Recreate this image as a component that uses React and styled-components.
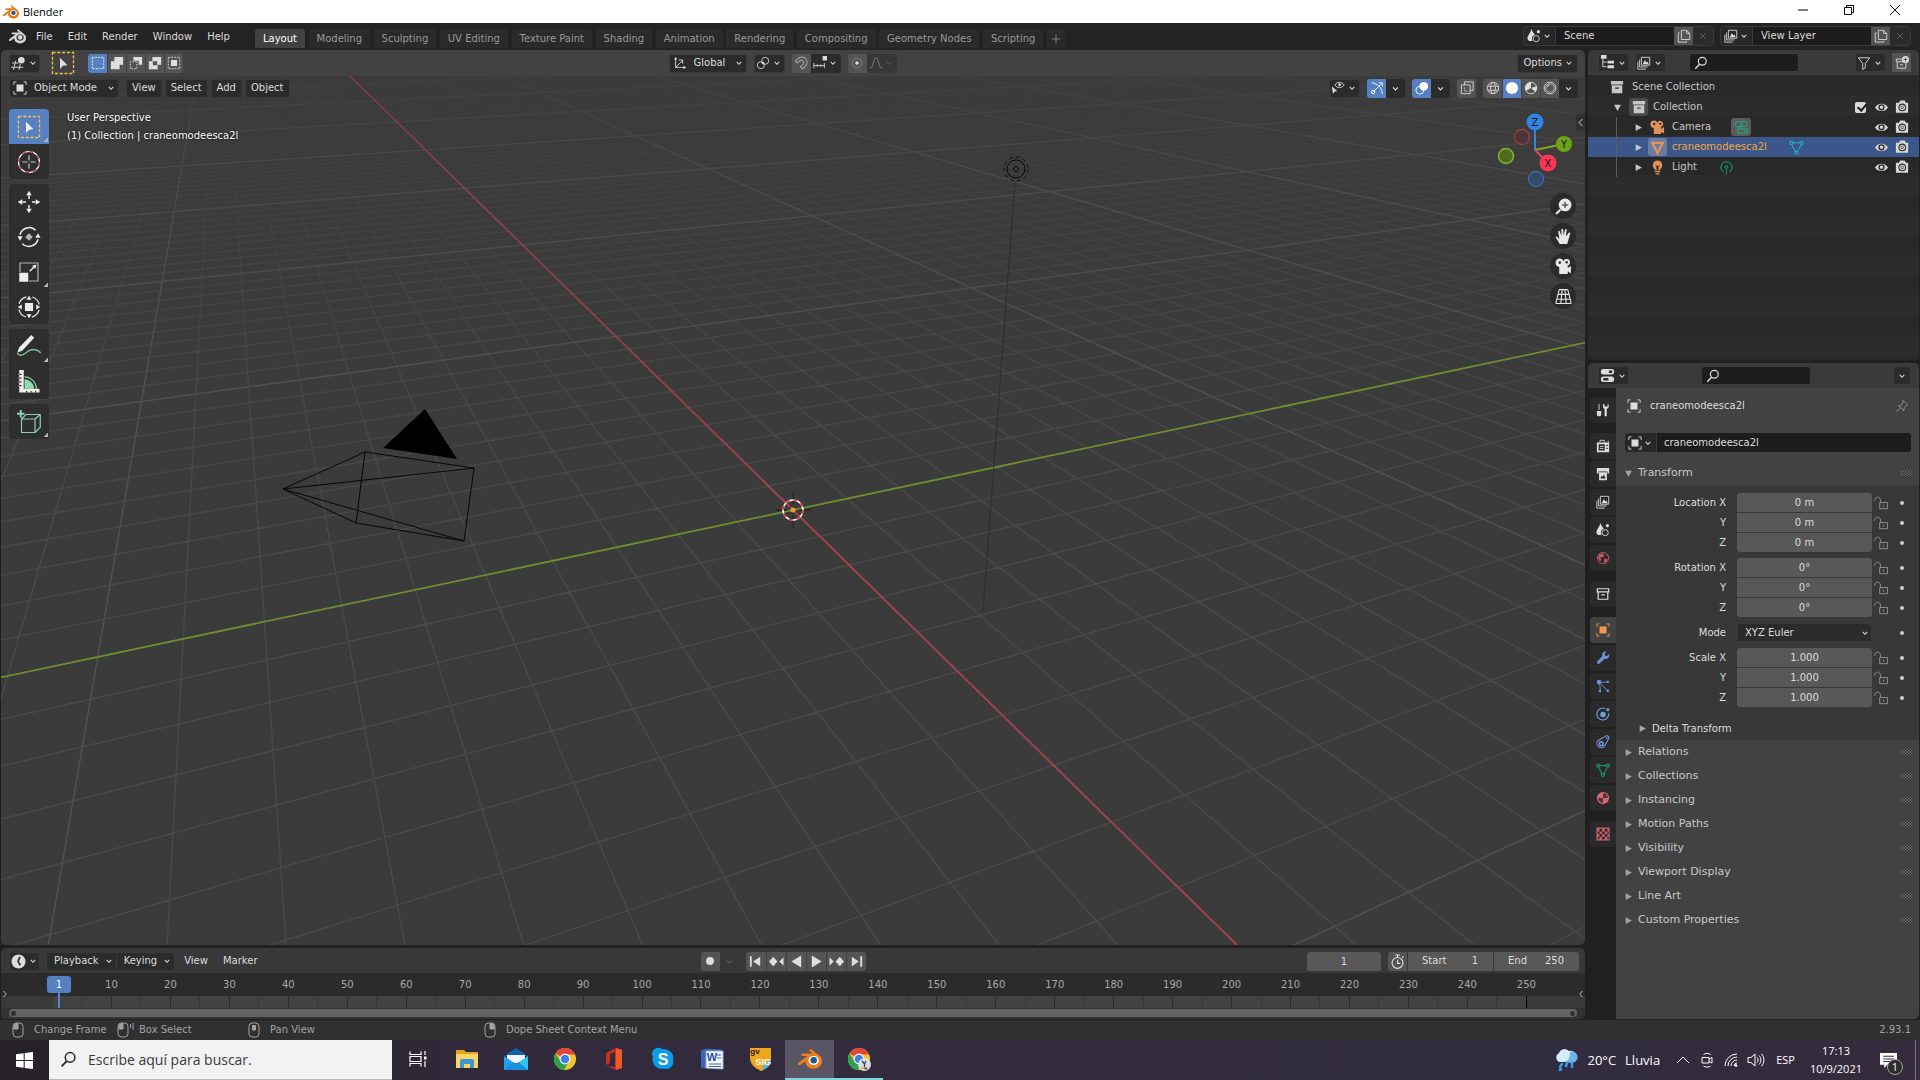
import React, { useState } from 'react';
import styled, { createGlobalStyle, css } from 'styled-components';

/* viewport grid: simple pinhole projection of the ground plane */
const VIEW = {
  width: 1584,
  height: 895,
  cx: 792,
  cy: 460,
  focal: 1100,
  distance: 18.1,
  sin: 0.455,
  cos: 0.8905,
};
const AXIS_X = [-0.4212, 0.907];
const AXIS_Y = [0.907, 0.4212];

const project = (r, s) => {
  const depth = VIEW.distance + s * VIEW.cos;
  return [
    (VIEW.cx + (VIEW.focal * r) / depth).toFixed(1),
    (VIEW.cy - (VIEW.focal * s * VIEW.sin) / depth).toFixed(1),
  ].join(' ');
};

const gridLine = (k, dir, side) => {
  const r0 = side[0] * k;
  const s0 = side[1] * k;
  const near = (3 - VIEW.distance - s0 * VIEW.cos) / (dir[1] * VIEW.cos);
  const from = Math.max(-150, near);
  const to = 220;
  if (from >= to) return '';
  return `M${project(r0 + dir[0] * from, s0 + dir[1] * from)}L${project(
    r0 + dir[0] * to,
    s0 + dir[1] * to,
  )}`;
};

const range = (from, to) =>
  Array.from({ length: to - from + 1 }, (_, i) => from + i);

const both = k => gridLine(k, AXIS_X, AXIS_Y) + gridLine(k, AXIS_Y, AXIS_X);
const minorGrid = range(-90, 90)
  .filter(k => k % 10 !== 0)
  .map(both)
  .join('');
const majorGrid = range(-12, 12)
  .filter(k => k !== 0)
  .map(k => both(k * 10))
  .join('');

const LOGO_BODY =
  'M7.35 14.831c.006.314.106.922.256 1.398a7.372 7.372 0 0 0 1.593 2.757 8.227 8.227 0 0 0 2.787 2.001 8.947 8.947 0 0 0 3.66.76 8.964 8.964 0 0 0 3.657-.772 8.285 8.285 0 0 0 2.785-2.01 7.428 7.428 0 0 0 1.592-2.762 6.964 6.964 0 0 0 .25-3.074 7.123 7.123 0 0 0-1.016-2.779 7.764 7.764 0 0 0-1.852-2.043h.002L13.566 2.55l-.02-.015c-.492-.378-1.319-.376-1.86.002-.547.382-.609 1.015-.123 1.415l-.001.001 3.126 2.543-9.53.01h-.013c-.788.001-1.545.518-1.695 1.172-.154.665.38 1.217 1.2 1.22V8.9l4.83-.01-8.62 6.617-.034.025c-.813.622-1.075 1.658-.563 2.315.52.667 1.625.668 2.447.004L7.414 14s-.069.52-.063.831zm12.09 1.741c-.97.988-2.326 1.548-3.795 1.55-1.47.004-2.827-.552-3.797-1.538a4.51 4.51 0 0 1-1.036-1.622 4.282 4.282 0 0 1 .282-3.519 4.702 4.702 0 0 1 1.153-1.371c.942-.768 2.141-1.183 3.396-1.185 1.256-.002 2.455.41 3.398 1.175.48.391.87.854 1.152 1.367a4.28 4.28 0 0 1 .522 1.706 4.236 4.236 0 0 1-.239 1.811 4.54 4.54 0 0 1-1.035 1.626';

const fill = { fill: 'currentColor', stroke: 'none' };

const icons = {
  chevron: <path d="M5 6.5l3 3.2 3-3.2" strokeWidth="1.4" />,
  plus: <path d="M8 2.500v11M2.500 8h11" />,
  close: <path d="M4 4l8 8M12 4l-8 8" />,
  left: <path d="M11 2L5.500 8l5.500 6" strokeWidth="1.6" />,
  right: <path d="M5 2l5.500 6L5 14" strokeWidth="1.6" />,
  triRight: <path d="M3 2v12l11-6z" {...fill} />,
  triDown: <path d="M2 3h12L8 14z" {...fill} />,
  search: (
    <>
      <circle cx="9.500" cy="6" r="4.500" strokeWidth="1.400" />
      <path d="M6.300 9.500L1.500 14.500" strokeWidth="1.600" />
    </>
  ),
  editor3d: (
    <>
      <path d="M1 7.500h7M0 12h13M5 5L2.500 15M10 8.500L8.500 15" />
      <circle cx="11" cy="4.500" r="3.500" {...fill} />
    </>
  ),
  boxSelect: (
    <>
      <rect
        x="1"
        y="1"
        width="14"
        height="14"
        stroke="#f5c344"
        strokeDasharray="2 1.200"
        strokeWidth=".9"
      />
      <path d="M6 4.500v7.500l2-2.200 3-.3z" {...fill} />
    </>
  ),
  dashed: (
    <rect x="1.500" y="1.500" width="13" height="13" strokeDasharray="2 1.300" />
  ),
  selExtend: <path d="M1 6h4V1h10v9h-4v5H1z" {...fill} />,
  selSubtract: (
    <>
      <path d="M5 1h10v9h-4V5.500H5z" {...fill} />
      <path d="M9 6.500H1.500v8H9z" strokeDasharray="2 1.300" />
    </>
  ),
  selInvert: (
    <path
      d="M5 1h10v9h-4v5H1V6h4zM5.500 6v4.500h5V6z"
      fillRule="evenodd"
      {...fill}
    />
  ),
  selIntersect: (
    <>
      <rect x="1.500" y="1.500" width="13" height="13" strokeDasharray="2 1.300" />
      <path d="M4.500 4.500h7v7h-7z" {...fill} />
    </>
  ),
  object: (
    <>
      <path d="M1 4.500V1h3M12 1h3v3.500M15 11.500V15h-3M4 15H1v-3.500" />
      <path d="M4 4h8v8H4z" {...fill} />
    </>
  ),
  axes: (
    <>
      <path d="M3 2v11h11M3 13l8-8M11 9V4.500H6.500" />
      <path d="M1 4l2-3 2 3zM12 11l3 2-3 2z" {...fill} />
    </>
  ),
  pivot: (
    <>
      <circle cx="10.500" cy="5.500" r="4" />
      <circle cx="5.500" cy="10.500" r="4" />
      <circle cx="8" cy="8" r="1.500" {...fill} />
    </>
  ),
  magnet: (
    <path
      d="M1.500 5.500L6 2c4-2.500 9 1 9 5 0 3.500-2.500 5.500-5.500 8L7.300 12.300c3-2 4.200-3.300 3.700-5S8.500 4 7 5.200L3.500 8z"
      strokeWidth="1.200"
    />
  ),
  snapTo: (
    <>
      <path d="M1 8v6M5 9.500v3M9 9.500v3M13 8v6M1 11h12" />
      <path d="M11 0h5v5h-5z" {...fill} />
    </>
  ),
  proportional: (
    <>
      <circle cx="8" cy="8" r="5.500" opacity=".35" />
      <circle cx="8" cy="8" r="2" {...fill} />
    </>
  ),
  falloff: <path d="M1 14c4 0 4-12 7-12s3 12 7 12" />,
  visible: (
    <>
      <path d="M1 6l1.200 8.500 2-2.500 3-.4z" {...fill} />
      <path d="M4.500 4.500c2-4 8-4 10.500 0-2.500 4-8.500 4-10.500 0z" />
      <circle cx="9.800" cy="4.300" r="1.600" {...fill} />
    </>
  ),
  gizmo: (
    <>
      <path d="M2 2c7 1 12 6 12 13M3 13L13 3M10 2h4v4" />
      <circle cx="3.500" cy="12.500" r="2" />
    </>
  ),
  overlays: (
    <>
      <circle cx="10" cy="6" r="5" {...fill} />
      <circle cx="5.500" cy="10.500" r="4.500" />
    </>
  ),
  xray: (
    <>
      <path d="M5 4.500V1h10v10h-3.500M1.500 4.500h10v10h-10z" />
      <path d="M5 7.500v4h4" strokeDasharray="1.500 1" />
    </>
  ),
  wireSphere: (
    <>
      <circle cx="8" cy="8" r="6.500" />
      <ellipse cx="8" cy="8" rx="2.700" ry="6.500" />
      <path d="M2 6h12M2 10.500h12" />
    </>
  ),
  solidSphere: <circle cx="8" cy="8" r="7" {...fill} />,
  materialSphere: (
    <>
      <circle cx="8" cy="8" r="6.500" />
      <path d="M8 8V1.500A6.500 6.500 0 0 0 2.400 11zM8 8l5 4.300A6.500 6.500 0 0 0 14 6z" {...fill} />
    </>
  ),
  renderSphere: (
    <>
      <circle cx="8" cy="8" r="6.700" />
      <circle cx="8" cy="8" r="4.800" strokeWidth=".8" />
      <path d="M5 7c.3-1.700 1.300-2.500 2.600-2.600" />
    </>
  ),
  scene: (
    <>
      <path d="M5 0C4 5 0 8 .5 11c.5 3 4 3.500 6 2-2-3 0-6 2.500-6.500C6.500 4 6 2 5 0z" {...fill} />
      <circle cx="10.500" cy="11" r="3.500" />
      <circle cx="13" cy="3" r="1.800" {...fill} />
    </>
  ),
  copy: (
    <>
      <path d="M5 1.500h6L14.500 5v7H5zM11 1.500V5h3.500" />
      <path d="M3 4.500H1.500V15H11v-1.500" />
    </>
  ),
  layers: (
    <>
      <path d="M5 1.500h9.500v9H5zM3 4v8.500h9M1 6.500V15h9" />
      <path d="M6.500 9.500l2.500-5 1.800 3 1-1.200L13.500 9.500z" {...fill} />
    </>
  ),
  outliner: (
    <>
      <path d="M3 4v8.500h4M3 7.500h4" />
      <path d="M1 0h6v4H1zM8 6h7v3H8zM8 11h7v3H8z" {...fill} />
    </>
  ),
  filter: <path d="M1.500 2h13L9.500 8.500v5l-3 2v-7z" />,
  newCollection: (
    <>
      <path d="M8 3.500H1.500v3h10M2.500 7v7h10V8M6 10h3" />
      <circle cx="12" cy="4" r="4" {...fill} />
      <path d="M12 1.800v4.400M9.800 4h4.400" stroke="#444" />
    </>
  ),
  archive: (
    <path
      d="M1 1h14v4H1zM2 6h12v9H2zM6 8.500h4V10H6z"
      fillRule="evenodd"
      {...fill}
    />
  ),
  archiveLine: (
    <path d="M1.500 2h13v3.500h-13zM2.500 6v8h11V6M6 9h4" strokeWidth="1.400" />
  ),
  movie: (
    <path
      d="M4.500.5a3.500 3.500 0 0 1 3.300 2.300A3.300 3.300 0 1 1 11 7.500h1v2l3-2v7l-3-2V15H4V8.500H4.500a4 4 0 0 1 0-8zM4.500 3a1.300 1.300 0 1 0 0 2.600 1.300 1.300 0 0 0 0-2.600zM11 2.800a1.200 1.200 0 1 0 0 2.400 1.200 1.200 0 0 0 0-2.400z"
      fillRule="evenodd"
      {...fill}
    />
  ),
  movieLine: (
    <>
      <circle cx="4.500" cy="4.500" r="3.300" />
      <circle cx="11" cy="4" r="3" />
      <path d="M4 9.500h7.500V14H4zM11.500 11l3-2v5.500l-3-2M5 7.500l5.500-.5" />
    </>
  ),
  meshSolid: <path d="M2.500 3h11L8 14z" strokeWidth="2.400" />,
  meshData: (
    <>
      <path d="M4 3h8M3 5l4 7.500M13 5l-4 7.500" />
      <path d="M1 1.500h3v3H1zM12 1.500h3v3h-3zM6.500 12h3v3h-3z" />
    </>
  ),
  bulb: (
    <>
      <path d="M8 .5a5 5 0 0 1 3 9V11H5V9.500a5 5 0 0 1 3-9zM5.500 5L7 7.500v3h2v-3L10.500 5 9 6H7z" fillRule="evenodd" {...fill} />
      <path d="M5 12.500h6M6 14.800h4" strokeWidth="1.300" />
    </>
  ),
  lightData: (
    <>
      <path d="M5 13a6 6 0 1 1 6 0" />
      <circle cx="8" cy="7.500" r="1.500" />
      <path d="M8 10v6" strokeDasharray="2 1" />
    </>
  ),
  eye: (
    <>
      <path d="M1 8C4 2.500 12 2.500 15 8 12 13 4 13 1 8z" {...fill} />
      <circle cx="8" cy="7.800" r="2.600" stroke="#2b2b2b" strokeWidth="1.500" />
    </>
  ),
  photo: (
    <>
      <path d="M1 3h3.500L6 .5h5L12.500 3H15v11.500H1z" {...fill} />
      <circle cx="8.300" cy="8.500" r="3.800" stroke="#2b2b2b" strokeWidth="1.200" />
      <circle cx="8.300" cy="8.500" r="1.500" stroke="#2b2b2b" strokeWidth=".8" />
    </>
  ),
  properties: (
    <>
      <rect x="1" y="1" width="14" height="6" rx="2.500" {...fill} />
      <rect x="1" y="9" width="14" height="6" rx="2.500" {...fill} />
      <path d="M9.500 4h3.500M3.500 12H9" stroke="#2b2b2b" strokeWidth="2.500" />
    </>
  ),
  tools: (
    <>
      <path d="M3.500 1v7" />
      <path d="M1 9h5v4c0 3-5 3-5 0z" {...fill} />
      <path d="M8 1.500v3.300L9.800 7v8h2.500V7L14.500 4.800V1.500h-1.300V4h-3.400V1.500z" {...fill} />
    </>
  ),
  render: (
    <>
      <path d="M1 4h14v11H1zM3 6v7h7V6zM11.800 6.500v1.500h1.700V6.500zM11.800 10v1.500h1.700V10z" fillRule="evenodd" {...fill} />
      <path d="M4.500 4V1.500h5V4M4.500 8.500h4M4.500 10.800h4M14 2v2" />
    </>
  ),
  output: (
    <>
      <path d="M1 1h14v6.500h-2V5H3v2.500H1z" {...fill} />
      <path d="M3.500 6h9v9h-9zM5 13h6l-2-4.500-1.500 2.500-1-1z" fillRule="evenodd" {...fill} />
    </>
  ),
  world: (
    <>
      <circle cx="8" cy="8" r="6.500" />
      <path d="M3 4l5-1.500L9.500 5 7 7.500 4.500 7 6 10l-1.500 2L2.500 8zM10 8.500l3.500.5-2 4-1.800.5-.7-3zM12 3l2.500 3-2-.5z" {...fill} />
    </>
  ),
  wrench: (
    <path
      d="M15 3.500l-2.500 2.300-2.200-.6-.5-2L12 .8C9.500 0 7 1.500 7 4.500c0 .5 0 1 .2 1.400L1.300 12c-1 1 .8 3.800 2.500 2.600L10 8.800c3 1 6-1.800 5-5.300z"
      {...fill}
    />
  ),
  particles: (
    <>
      <path d="M4 4l9 9M4 4l1 9M4 4l9-.5" />
      <circle cx="3.500" cy="3.500" r="2.700" {...fill} />
      <circle cx="13.500" cy="3.200" r="1.500" {...fill} />
      <circle cx="13.500" cy="13.500" r="1.500" {...fill} />
      <circle cx="4.500" cy="13.800" r="1.500" {...fill} />
    </>
  ),
  physics: (
    <>
      <path d="M10.500 1.800A6.800 6.800 0 1 0 14.500 7" strokeWidth="1.300" />
      <circle cx="8" cy="8.500" r="3.200" {...fill} />
      <circle cx="13.500" cy="3" r="1.800" {...fill} />
    </>
  ),
  constraint: (
    <>
      <path d="M2 6.500L11.500 1c3-.7 4 2 2.500 4l-4 7.500A5 5 0 1 1 2 6.500z" strokeWidth="1.200" />
      <circle cx="6" cy="10" r="2.200" strokeWidth="1.800" />
      <circle cx="12.300" cy="3.500" r="1" {...fill} />
    </>
  ),
  material: (
    <>
      <circle cx="8" cy="8" r="7" {...fill} />
      <path d="M8 8V2.500A5.500 5.500 0 0 1 13.500 8zM8 8v5.500A5.500 5.500 0 0 1 2.500 8z" fill="#2a2a2a" opacity=".8" stroke="none" />
    </>
  ),
  texture: (
    <path
      d="M.5.500h15v15H.500zM4 2v3h3V2zM10 2v3h3V2zM2 5v3h2V5zM7 5v3h3V5zM13 5v3h1.500V5zM4 8v3h3V8zM10 8v3h3V8zM2 11v3h2v-3zM7 11v3h3v-3zM13 11v3h1.500v-3z"
      fillRule="evenodd"
      {...fill}
    />
  ),
  pin: (
    <path d="M9 1.500l5.500 5.500-1.500.5-2.500 2.500-.5 3.500-6-6 3.500-.5L9 4zM6.500 9.500L1.500 14.500" />
  ),
  unlock: (
    <>
      <path d="M6.500 7.500h9v7h-9zM11 10v2" />
      <path d="M.7 5.500C.7 0 7 0 7.500 5v2.500" />
    </>
  ),
  clock: (
    <>
      <circle cx="8" cy="8" r="7.500" {...fill} />
      <path d="M9.500 3L7.500 8l2.500 4" stroke="#2b2b2b" strokeWidth="1.800" />
    </>
  ),
  stopwatch: (
    <>
      <circle cx="8" cy="9.500" r="5.800" strokeWidth="1.200" />
      <path d="M8 6v4h3M8 3.500V1M5.500 1h5M13 4l1.500-1.500" strokeWidth="1.200" />
    </>
  ),
  record: <circle cx="8" cy="8" r="4.500" {...fill} />,
  first: <path d="M2 2.500h2v11H2zM13 3v10L5.500 8z" {...fill} />,
  prevKey: <path d="M0 8l4.500-5L9 8l-4.500 5zM15.500 3.500v9L11 8z" {...fill} />,
  prev: <path d="M13 1.500v13L2.500 8z" {...fill} />,
  play: <path d="M3 1.500v13L13.500 8z" {...fill} />,
  nextKey: <path d="M7 8l4.500-5L16 8l-4.500 5zM.5 3.500v9L5 8z" {...fill} />,
  last: <path d="M12 2.500h2v11h-2zM3 3v10l7.500-5z" {...fill} />,
  cursor: (
    <>
      <circle cx="8" cy="8" r="7" stroke="#fff" strokeWidth=".8" />
      <circle cx="8" cy="8" r="7" stroke="#b5424c" strokeWidth=".9" strokeDasharray="2.750 2.750" />
      <path d="M8 3.500v3.500M8 9v3.500M3.500 8H7M9 8h3.500" strokeWidth=".8" opacity=".8" />
    </>
  ),
  move: (
    <>
      <path d="M8 .5l1.800 3H6.200zM8 15.500l1.800-3H6.200zM.5 8l3-1.800v3.600zM15.500 8l-3-1.800v3.600z" {...fill} />
      <path d="M8 3.500V6M8 10v2.500M3.500 8H6M10 8h2.500" />
    </>
  ),
  rotate: (
    <>
      <path d="M2 6.500a6.300 6.300 0 0 1 10.500-3M14 9.500a6.300 6.300 0 0 1-10.500 3" />
      <path d="M.3 7.500h3.500L2 10.500zM12.200 8.500h3.500L14 5.500z" {...fill} />
      <path d="M8 5.500L10.500 8 8 10.500 5.500 8z" opacity=".7" {...fill} />
    </>
  ),
  scale: (
    <>
      <path d="M2 8V2h12v12H8" strokeWidth=".8" opacity=".7" />
      <path d="M1.500 8.500h6V14.500H1.500z" {...fill} />
      <path d="M8.500 7.500l3-3" />
      <path d="M13 3L10 3.800l2.200 2.200z" {...fill} />
    </>
  ),
  transform: (
    <>
      <circle cx="8" cy="8" r="7" strokeWidth=".8" strokeDasharray="7 4" strokeDashoffset="-2" />
      <path d="M5.300 5.300h5.400v5.400H5.300z" {...fill} />
      <path d="M8 .5l1.700 2.700H6.300zM8 15.500l1.700-2.700H6.300zM.5 8l2.700-1.700v3.400zM15.500 8l-2.700-1.700v3.400z" {...fill} />
    </>
  ),
  annotate: (
    <>
      <path d="M0 12c3 4 6-1 9-2s5 0 7 2" stroke="#7fbf9b" strokeWidth=".9" />
      <path d="M9.500 0l2 1.800-8 8.700-3.200 1.200 1-3.200z" {...fill} />
    </>
  ),
  measure: (
    <>
      <path d="M5 6a7 7 0 0 1 6.500 6.500H5z" fill="#8fdcb0" stroke="none" />
      <path d="M5 4.500a8.500 8.500 0 0 1 8 8" stroke="#8fdcb0" strokeWidth=".7" />
      <path d="M1.500 0H4.500v12.500H15V15H1.500zM1 2.500h2v.8H1zM1 5h2v.8H1zM1 7.500h2v.8H1zM1 10h2v.8H1zM6 14v1.200h.8V14zM9 14v1.200h.8V14zM12 14v1.200h.8V14z" fillRule="evenodd" {...fill} />
    </>
  ),
  addCube: (
    <g stroke="#8fcfae" strokeWidth=".8">
      <path d="M3 6h9v9H3zM3 6l3-3h9.500v8.500L12 15M12 6l3.500-3" />
      <path d="M2.500 0v5M0 2.500h5" strokeWidth="1.300" />
    </g>
  ),
  zoom: (
    <>
      <circle cx="9.500" cy="6.500" r="6" {...fill} />
      <path d="M5 11l-4 4" strokeWidth="2" />
      <path d="M9.500 3.500v6M6.500 6.500h6" stroke="#2b2b2b" />
    </>
  ),
  hand: (
    <path
      d="M4.500 15L.700 9c0-1.200 1.300-1.300 2 0l1.500 1.500L3 3.500c0-1 1.300-1.200 1.600 0L6 7.500 6 1.500c.2-1.200 1.500-1.200 1.700 0L8 7l1.500-5.500c.5-1 1.600-.7 1.500.3L10.200 8l2.800-3.500c.8-.8 1.700-.1 1.300.8L11.500 15z"
      {...fill}
    />
  ),
  persp: (
    <path d="M4 1.500h8M2.500 6h11M1.500 10.500h13M.7 14.500h14.600M4 1.500L.7 14.500M6.700 1.500L5.500 14.500M9.300 1.500l1.200 13M12 1.500l3.300 13" />
  ),
};

function Icon({ name, size = 14, color }) {
  return (
    <Svg viewBox="0 0 16 16" $size={size} $color={color} aria-hidden="true">
      {icons[name]}
    </Svg>
  );
}

function BlenderLogo({ size = 16, color = 'currentColor', pupil }) {
  return (
    <Svg viewBox="0 0 24 24" $size={size} aria-hidden="true">
      {pupil && <circle cx="15.700" cy="13.300" r="6" fill="#fff" stroke="none" />}
      <path d={LOGO_BODY} fill={color} stroke="none" />
      <circle
        cx="15.700"
        cy="13.300"
        r="3.300"
        fill={pupil || color}
        stroke="none"
      />
    </Svg>
  );
}

const menus = ['File', 'Edit', 'Render', 'Window', 'Help'];
const workspaces = [
  'Layout',
  'Modeling',
  'Sculpting',
  'UV Editing',
  'Texture Paint',
  'Shading',
  'Animation',
  'Rendering',
  'Compositing',
  'Geometry Nodes',
  'Scripting',
];

function IdBlock({ icon, label }) {
  return (
    <IdGroup>
      <IdButton type="button" aria-label={`Browse ${label}`}>
        <Icon name={icon} />
        <Icon name="chevron" size={12} />
      </IdButton>
      <IdInput defaultValue={label} aria-label={label} />
      <IdCopy type="button" aria-label={`New ${label}`}>
        <Icon name="copy" />
      </IdCopy>
      <IdRemove type="button" aria-label={`Remove ${label}`}>
        <Icon name="close" size={12} />
      </IdRemove>
    </IdGroup>
  );
}

function TopBar() {
  const [active, setActive] = useState('Layout');
  return (
    <TopBarBox>
      <MenuList>
        <BlenderLogo size={17} color="#d8d8d8" />
        {menus.map(m => (
          <MenuButton type="button" key={m}>
            {m}
          </MenuButton>
        ))}
      </MenuList>
      <TabList>
        {workspaces.map(w => (
          <Tab
            type="button"
            key={w}
            $active={w === active}
            onClick={() => setActive(w)}
          >
            {w}
          </Tab>
        ))}
        <AddTab type="button" aria-label="Add workspace">
          <Icon name="plus" size={12} />
        </AddTab>
      </TabList>
      <IdBlocks>
        <IdBlock icon="scene" label="Scene" />
        <IdBlock icon="layers" label="View Layer" />
      </IdBlocks>
    </TopBarBox>
  );
}

function Scene3D() {
  const v = VIEW;
  return (
    <Canvas
      viewBox={`0 0 ${v.width} ${v.height}`}
      preserveAspectRatio="xMidYMid slice"
      role="img"
      aria-label="3D scene"
    >
      <defs>
        <linearGradient id="fadeMinor" x1="0" y1="0" x2="0" y2="1">
          <stop offset="0" stopColor="#fff" stopOpacity="0" />
          <stop offset=".06" stopColor="#fff" stopOpacity=".08" />
          <stop offset=".18" stopColor="#fff" stopOpacity=".4" />
          <stop offset=".4" stopColor="#fff" stopOpacity=".85" />
          <stop offset=".6" stopColor="#fff" stopOpacity="1" />
        </linearGradient>
        <linearGradient id="fadeMajor" x1="0" y1="0" x2="0" y2="1">
          <stop offset="0" stopColor="#fff" stopOpacity="0" />
          <stop offset=".04" stopColor="#fff" stopOpacity=".25" />
          <stop offset=".15" stopColor="#fff" stopOpacity=".7" />
          <stop offset=".4" stopColor="#fff" stopOpacity="1" />
        </linearGradient>
        <linearGradient id="fadeAxis" x1="0" y1="0" x2="0" y2="1">
          <stop offset=".02" stopColor="#fff" stopOpacity=".5" />
          <stop offset=".5" stopColor="#fff" stopOpacity="1" />
        </linearGradient>
        <mask id="minor" maskUnits="userSpaceOnUse" x="0" y="0" width={v.width} height={v.height}>
          <rect width={v.width} height={v.height} fill="url(#fadeMinor)" />
        </mask>
        <mask id="major" maskUnits="userSpaceOnUse" x="0" y="0" width={v.width} height={v.height}>
          <rect width={v.width} height={v.height} fill="url(#fadeMajor)" />
        </mask>
        <mask id="axis" maskUnits="userSpaceOnUse" x="0" y="0" width={v.width} height={v.height}>
          <rect width={v.width} height={v.height} fill="url(#fadeAxis)" />
        </mask>
      </defs>
      <g fill="none">
        <path d={minorGrid} stroke="#4a4a4a" strokeWidth="1.400" mask="url(#minor)" />
        <path d={majorGrid} stroke="#505050" strokeWidth="1.500" mask="url(#major)" />
        <path d={gridLine(0, AXIS_Y, AXIS_X)} stroke="#6d8f2e" strokeWidth="1.800" />
        <path d={gridLine(0, AXIS_X, AXIS_Y)} stroke="#a94250" strokeWidth="1.800" mask="url(#axis)" />
        {/* camera */}
        <path
          d="M282 439L364 402L473 418L463 491L355 473L282 439L473 418M282 439L463 491M364 402L355 473"
          stroke="#000"
          strokeWidth=".9"
        />
        <path d="M424 359L382 398L456 409z" fill="#000" />
        {/* light */}
        <path d="M1014 132L982 562" stroke="#2b2b2b" opacity=".8" />
        <g stroke="#000" strokeWidth=".9">
          <circle cx="1015" cy="119" r="9" />
          <circle cx="1015" cy="119" r="12" strokeDasharray="4 3" opacity=".8" />
          <path d="M1015 116l3 3-3 3-3-3z" />
        </g>
        {/* 3d cursor */}
        <path d="M792 442v12M792 466v12M774 460h12M798 460h12" stroke="#1d1d1d" />
        <circle cx="792" cy="460" r="10" stroke="#fff" strokeWidth="1.500" />
        <circle cx="792" cy="460" r="10" stroke="#d83a45" strokeWidth="1.700" strokeDasharray="3.930 3.930" />
        <circle cx="792" cy="460" r="2.500" fill="#f39a2e" />
      </g>
    </Canvas>
  );
}

function NavGizmo() {
  return (
    <GizmoSvg viewBox="0 0 80 80" role="img" aria-label="Navigation gizmo">
      <circle cx="26" cy="28" r="7.500" fill="#4b3438" stroke="#9c3c4a" strokeWidth="1.300" />
      <circle cx="40" cy="70" r="7.500" fill="#33496a" stroke="#3e6ba5" strokeWidth="1.300" />
      <circle cx="10" cy="47" r="7.500" fill="#4f6b20" stroke="#86b32c" strokeWidth="1.500" />
      <path d="M39 41V13" stroke="#3685e0" strokeWidth="2" />
      <path d="M39 41L68 35" stroke="#7aa822" strokeWidth="2" />
      <path d="M39 41L52 54" stroke="#f33a57" strokeWidth="2" />
      <circle cx="39" cy="13" r="8.500" fill="#2f83e3" />
      <circle cx="68" cy="35" r="8" fill="#6fa21c" />
      <circle cx="52" cy="54" r="8.500" fill="#fa3656" />
      <g fill="#141414" fontSize="10" textAnchor="middle">
        <text x="39" y="17">Z</text>
        <text x="68" y="39">Y</text>
        <text x="52" y="58">X</text>
      </g>
    </GizmoSvg>
  );
}

const selectModes = [
  'dashed',
  'selExtend',
  'selSubtract',
  'selInvert',
  'selIntersect',
];
const toolGroups = [
  [
    { icon: 'boxSelect', label: 'Select Box', active: true, more: true },
    { icon: 'cursor', label: 'Cursor' },
  ],
  [
    { icon: 'move', label: 'Move' },
    { icon: 'rotate', label: 'Rotate' },
    { icon: 'scale', label: 'Scale', more: true },
    { icon: 'transform', label: 'Transform' },
  ],
  [
    { icon: 'annotate', label: 'Annotate', more: true },
    { icon: 'measure', label: 'Measure' },
  ],
  [{ icon: 'addCube', label: 'Add Cube', more: true }],
];
const shadings = ['wireSphere', 'solidSphere', 'materialSphere', 'renderSphere'];
const navButtons = ['zoom', 'hand', 'movie', 'persp'];

function EditorType({ icon }) {
  return (
    <DarkButton type="button" aria-label="Editor type" $wide>
      <Icon name={icon} size={15} />
      <Icon name="chevron" size={12} />
    </DarkButton>
  );
}

function Viewport() {
  return (
    <ViewportBox>
      <Scene3D />
      <ToolHeader>
        <HeaderSide>
          <EditorType icon="editor3d" />
          <ActiveTool type="button" aria-label="Active tool">
            <Icon name="boxSelect" size={24} />
          </ActiveTool>
          <Strip>
            {selectModes.map((m, i) => (
              <StripButton type="button" key={m} aria-label={m} $active={i === 0}>
                <Icon name={m} />
              </StripButton>
            ))}
          </Strip>
        </HeaderSide>
        <HeaderCenter>
          <SelectBox $width={78}>
            <Icon name="axes" />
            <Select aria-label="Transform orientation" defaultValue="Global">
              <option>Global</option>
              <option>Local</option>
            </Select>
            <Icon name="chevron" size={12} />
          </SelectBox>
          <DarkButton type="button" aria-label="Pivot point" $wide>
            <Icon name="pivot" />
            <Icon name="chevron" size={12} />
          </DarkButton>
          <Strip>
            <StripButton type="button" aria-label="Snap" $dim>
              <Icon name="magnet" />
            </StripButton>
            <StripMenu type="button" aria-label="Snap to">
              <Icon name="snapTo" />
              <Icon name="chevron" size={12} />
            </StripMenu>
          </Strip>
          <Strip>
            <StripButton type="button" aria-label="Proportional editing">
              <Icon name="proportional" />
            </StripButton>
            <StripMenu type="button" aria-label="Falloff" $disabled>
              <Icon name="falloff" />
              <Icon name="chevron" size={12} />
            </StripMenu>
          </Strip>
        </HeaderCenter>
        <HeaderSide $end>
          <DarkButton type="button">
            Options
            <Icon name="chevron" size={12} />
          </DarkButton>
        </HeaderSide>
      </ToolHeader>
      <ModeHeader>
        <SelectBox $width={110}>
          <Icon name="object" />
          <Select aria-label="Mode" defaultValue="Object Mode">
            <option>Object Mode</option>
            <option>Edit Mode</option>
          </Select>
          <Icon name="chevron" size={12} />
        </SelectBox>
        <ViewMenus>
          {['View', 'Select', 'Add', 'Object'].map(m => (
            <DarkButton type="button" key={m}>
              {m}
            </DarkButton>
          ))}
        </ViewMenus>
        <ViewSettings>
          <DarkButton type="button" aria-label="Object visibility" $wide>
            <Icon name="visible" />
            <Icon name="chevron" size={12} />
          </DarkButton>
          <Strip>
            <StripButton type="button" aria-label="Gizmos" $active>
              <Icon name="gizmo" />
            </StripButton>
            <StripMenu type="button" aria-label="Gizmo options">
              <Icon name="chevron" size={13} />
            </StripMenu>
          </Strip>
          <Strip>
            <StripButton type="button" aria-label="Overlays" $active>
              <Icon name="overlays" />
            </StripButton>
            <StripMenu type="button" aria-label="Overlay options">
              <Icon name="chevron" size={13} />
            </StripMenu>
          </Strip>
          <Strip>
            <StripButton type="button" aria-label="Toggle X-Ray">
              <Icon name="xray" />
            </StripButton>
          </Strip>
          <Strip>
            {shadings.map(s => (
              <StripButton
                type="button"
                key={s}
                aria-label={s}
                $active={s === 'solidSphere'}
              >
                <Icon name={s} />
              </StripButton>
            ))}
            <StripMenu type="button" aria-label="Shading options">
              <Icon name="chevron" size={13} />
            </StripMenu>
          </Strip>
        </ViewSettings>
      </ModeHeader>
      <ViewBody>
        <Toolbar>
          {toolGroups.map((group, i) => (
            <ToolGroup key={i}>
              {group.map(t => (
                <ToolButton
                  type="button"
                  key={t.label}
                  aria-label={t.label}
                  $active={t.active}
                  $more={t.more}
                >
                  <Icon name={t.icon} size={24} />
                </ToolButton>
              ))}
            </ToolGroup>
          ))}
        </Toolbar>
        <ViewInfo>
          <p>User Perspective</p>
          <p>(1) Collection | craneomodeesca2l</p>
        </ViewInfo>
        <NavColumn>
          <NavGizmo />
          {navButtons.map(n => (
            <NavButton type="button" key={n} aria-label={n}>
              <Icon name={n} size={17} />
            </NavButton>
          ))}
        </NavColumn>
        <SidebarToggle type="button" aria-label="Show sidebar">
          <Icon name="left" size={9} />
        </SidebarToggle>
      </ViewBody>
    </ViewportBox>
  );
}

const treeItems = [
  { label: 'Camera', icon: 'movie', data: 'movieLine', boxed: true },
  { label: 'craneomodeesca2l', icon: 'meshSolid', data: 'meshData', selected: true },
  { label: 'Light', icon: 'bulb', data: 'lightData' },
];

function RowToggles({ check }) {
  return (
    <Toggles>
      {check && <Check type="checkbox" defaultChecked aria-label="Exclude from view layer" />}
      <PlainButton type="button" aria-label="Hide in viewport">
        <Icon name="eye" size={15} />
      </PlainButton>
      <PlainButton type="button" aria-label="Disable in renders">
        <Icon name="photo" size={14} />
      </PlainButton>
    </Toggles>
  );
}

function Outliner() {
  return (
    <OutlinerBox>
      <PanelHeader>
        <EditorType icon="outliner" />
        <DarkButton type="button" aria-label="Display mode" $wide>
          <Icon name="layers" />
          <Icon name="chevron" size={12} />
        </DarkButton>
        <Spacer $grow={1} />
        <SearchField>
          <Icon name="search" />
          <input type="search" aria-label="Filter outliner" />
        </SearchField>
        <Spacer $grow={4} />
        <DarkButton type="button" aria-label="Filter" $wide>
          <Icon name="filter" />
          <Icon name="chevron" size={12} />
        </DarkButton>
        <StripButton type="button" aria-label="New collection">
          <Icon name="newCollection" />
        </StripButton>
      </PanelHeader>
      <Tree>
        <TreeRow $indent={22}>
          <Icon name="archive" />
          <TreeLabel>Scene Collection</TreeLabel>
        </TreeRow>
        <TreeRow $indent={25}>
          <Icon name="triDown" size={9} />
          <IconTile $first>
            <Icon name="archive" />
          </IconTile>
          <TreeLabel>Collection</TreeLabel>
          <RowToggles check />
        </TreeRow>
        {treeItems.map(t => (
          <TreeRow key={t.label} $indent={28} $selected={t.selected} $child>
            <Icon name="triRight" size={9} />
            <IconTile $lit={t.selected}>
              <Icon name={t.icon} size={15} color="#e0935a" />
            </IconTile>
            <TreeLabel>{t.label}</TreeLabel>
            <DataTile $lit={t.boxed}>
              <Icon name={t.data} size={15} color={t.selected ? '#1fc0c8' : '#16b088'} />
            </DataTile>
            <RowToggles />
          </TreeRow>
        ))}
      </Tree>
    </OutlinerBox>
  );
}

const propertyTabs = [
  [{ icon: 'tools' }],
  [
    { icon: 'render' },
    { icon: 'output' },
    { icon: 'layers' },
    { icon: 'scene' },
    { icon: 'world', color: '#c65765' },
  ],
  [{ icon: 'archiveLine' }],
  [
    { icon: 'object', color: '#ee9a4e', active: true },
    { icon: 'wrench', color: '#6f93d2' },
    { icon: 'particles', color: '#6f8fd0' },
    { icon: 'physics', color: '#6f9bd8' },
    { icon: 'constraint', color: '#7a9bd8' },
    { icon: 'meshData', color: '#15b486' },
    { icon: 'material', color: '#d46572' },
  ],
  [{ icon: 'texture', color: '#c9606c' }],
];

const vectors = [
  { name: 'Location', values: ['0 m', '0 m', '0 m'] },
  { name: 'Rotation', values: ['0°', '0°', '0°'] },
];
const scale = { name: 'Scale', values: ['1.000', '1.000', '1.000'] };

const closedPanels = [
  'Relations',
  'Collections',
  'Instancing',
  'Motion Paths',
  'Visibility',
  'Viewport Display',
  'Line Art',
  'Custom Properties',
];

function VectorFields({ name, values }) {
  return (
    <FieldGroup>
      {['X', 'Y', 'Z'].map((axis, i) => {
        const id = `${name}-${axis}`.toLowerCase();
        return (
          <FieldRow key={axis}>
            <label htmlFor={id}>{i === 0 ? `${name} ${axis}` : axis}</label>
            <NumberInput id={id} defaultValue={values[i]} $first={i === 0} $last={i === 2} />
            <LockButton type="button" aria-label={`Lock ${name} ${axis}`}>
              <Icon name="unlock" />
            </LockButton>
            <Dot />
          </FieldRow>
        );
      })}
    </FieldGroup>
  );
}

function Properties() {
  return (
    <PropertiesBox>
      <PanelHeader>
        <EditorType icon="properties" />
        <Spacer $grow={6} />
        <SearchField>
          <Icon name="search" />
          <input type="search" aria-label="Search properties" />
        </SearchField>
        <Spacer $grow={7} />
        <DarkButton type="button" aria-label="Options">
          <Icon name="chevron" size={12} />
        </DarkButton>
      </PanelHeader>
      <PropertiesBody>
        <PropertyNav>
          {propertyTabs.map((group, i) => (
            <NavGroup key={i}>
              {group.map(t => (
                <PropertyTab type="button" key={t.icon} aria-label={t.icon} $active={t.active}>
                  <Icon name={t.icon} color={t.color} />
                </PropertyTab>
              ))}
            </NavGroup>
          ))}
        </PropertyNav>
        <PropertyContent>
          <Breadcrumb>
            <Icon name="object" />
            <span>craneomodeesca2l</span>
            <PlainButton type="button" aria-label="Pin">
              <Icon name="pin" color="#969696" />
            </PlainButton>
          </Breadcrumb>
          <NameRow>
            <IdButton type="button" aria-label="Browse object">
              <Icon name="object" />
              <Icon name="chevron" size={12} />
            </IdButton>
            <NameInput defaultValue="craneomodeesca2l" aria-label="Object name" />
          </NameRow>
          <PanelTitle type="button">
            <Icon name="triDown" size={9} />
            Transform
            <Grip />
          </PanelTitle>
          <TransformPanel>
            {vectors.map(v => (
              <VectorFields key={v.name} {...v} />
            ))}
            <FieldRow>
              <label htmlFor="rotation-mode">Mode</label>
              <ModeSelect>
                <Select id="rotation-mode" defaultValue="XYZ Euler">
                  <option>XYZ Euler</option>
                  <option>Quaternion</option>
                </Select>
                <Icon name="chevron" size={12} />
              </ModeSelect>
              <Dot />
            </FieldRow>
            <VectorFields {...scale} />
            <SubPanelTitle type="button">
              <Icon name="triRight" size={9} />
              Delta Transform
            </SubPanelTitle>
          </TransformPanel>
          {closedPanels.map(p => (
            <PanelTitle type="button" key={p}>
              <Icon name="triRight" size={9} />
              {p}
              <Grip />
            </PanelTitle>
          ))}
        </PropertyContent>
      </PropertiesBody>
    </PropertiesBox>
  );
}

const LAST_FRAME = 250;
const frames = range(1, 25).map(n => n * 10);
const transport = ['first', 'prevKey', 'prev', 'play', 'nextKey', 'last'];

function Timeline() {
  const [frame] = useState(1);
  return (
    <TimelineBox>
      <TimelineHeader>
        <HeaderSide>
          <EditorType icon="clock" />
          <MenuPair>
            <DarkButton type="button">
              Playback
              <Icon name="chevron" size={12} />
            </DarkButton>
            <DarkButton type="button">
              Keying
              <Icon name="chevron" size={12} />
            </DarkButton>
          </MenuPair>
          <FlatMenus>
            <button type="button">View</button>
            <button type="button">Marker</button>
          </FlatMenus>
        </HeaderSide>
        <HeaderCenter>
          <Strip>
            <StripButton type="button" aria-label="Auto keying">
              <Icon name="record" />
            </StripButton>
            <StripMenu type="button" aria-label="Auto keying options" $disabled>
              <Icon name="chevron" size={13} />
            </StripMenu>
          </Strip>
          <Strip>
            {transport.map(t => (
              <TransportButton type="button" key={t} aria-label={t}>
                <Icon name={t} size={15} />
              </TransportButton>
            ))}
          </Strip>
        </HeaderCenter>
        <HeaderSide $end>
          <FrameInput defaultValue={frame} aria-label="Current frame" />
          <FrameRange>
            <StripButton type="button" aria-label="Use preview range">
              <Icon name="stopwatch" size={15} />
            </StripButton>
            <RangeField>
              Start
              <input defaultValue="1" />
            </RangeField>
            <RangeField>
              End
              <input defaultValue="250" />
            </RangeField>
          </FrameRange>
        </HeaderSide>
      </TimelineHeader>
      <Ruler>
        <Numbers>
          {frames.map(f => (
            <span key={f}>{f}</span>
          ))}
        </Numbers>
        <Track>
          {frames.map(f => (
            <TrackCell key={f} $end={f === LAST_FRAME} />
          ))}
        </Track>
        <Playhead
          style={{ left: `calc(52px + (100% - 110px) * ${frame / LAST_FRAME})` }}
        >
          {frame}
        </Playhead>
        <EdgeToggle type="button" aria-label="Show channels">
          <Icon name="right" size={8} />
        </EdgeToggle>
        <EdgeToggle type="button" aria-label="Show sidebar" $end>
          <Icon name="left" size={8} />
        </EdgeToggle>
      </Ruler>
      <ScrollTrack>
        <ScrollBar>
          <i />
          <i />
        </ScrollBar>
      </ScrollTrack>
    </TimelineBox>
  );
}

function Mouse({ part }) {
  const parts = {
    left: 'M2 6V4.500C2 2 4 1.500 6 1.500V7H2z',
    middle: 'M4.500 3.500h3v4.500h-3z',
    right: 'M10 6V4.500C10 2 8 1.500 6 1.500V7h4z',
  };
  return (
    <MouseSvg viewBox="0 0 17 16" aria-hidden="true">
      <rect x="1" y="1" width="10" height="14" rx="3.500" />
      <path d={parts[part === 'drag' ? 'left' : part]} fill="currentColor" />
      {part === 'drag' && <path d="M13.500 2v4M16 1v7" />}
    </MouseSvg>
  );
}

function StatusBar() {
  return (
    <StatusBox>
      <Hint $width={105}>
        <Mouse part="left" />
        Change Frame
      </Hint>
      <Hint $width={131}>
        <Mouse part="drag" />
        Box Select
      </Hint>
      <Hint $width={236}>
        <Mouse part="middle" />
        Pan View
      </Hint>
      <Hint>
        <Mouse part="right" />
        Dope Sheet Context Menu
      </Hint>
      <Version>2.93.1</Version>
    </StatusBox>
  );
}

const chromeArt = (
  <>
    <circle cx="12" cy="12" r="11" fill="#f2c230" />
    <path d="M12 12L2.500 6.500A11 11 0 0 1 21.500 6.500L22 7.500H12z" fill="#e2453a" />
    <path d="M2.500 6.500A11 11 0 0 0 11 23l5-8.500L7.500 14.500z" fill="#2da14e" />
    <circle cx="12" cy="12" r="5.400" fill="#fff" />
    <circle cx="12" cy="12" r="4.300" fill="#3f7fe8" />
  </>
);

const apps = [
  {
    name: 'Task View',
    art: (
      <g fill="none" strokeWidth="1.200">
        <path d="M4 4.500v3h11v-3M4 19.500v-3h11v3M4 9.500h11v5H4zM19 4v4M19 14v6" />
        <path d="M18 9.500h2.500v3H18z" fill="#fff" />
      </g>
    ),
  },
  {
    name: 'File Explorer',
    art: (
      <>
        <path d="M1 3h8l2 2h12v5H1z" fill="#e3a321" />
        <path d="M1 7h22v14H1z" fill="#fbd566" />
        <path d="M5 14c0-1 1-2 2-2h10c1 0 2 1 2 2v7h-4v-4H9v4H5z" fill="#3c97d4" />
      </>
    ),
  },
  {
    name: 'Mail',
    art: (
      <>
        <path d="M0 9L12 1l12 8z" fill="#0f63ad" />
        <path d="M3 8h18v8H3z" fill="#f4f7fa" />
        <path d="M0 9l12 8-12 6z" fill="#1fa2e8" />
        <path d="M24 9l-12 8 12 6z" fill="#36c1f4" />
        <path d="M0 23l9.500-8 2.500 2 2.500-2 9.500 8z" fill="#1b8fdd" />
      </>
    ),
  },
  { name: 'Chrome', art: chromeArt },
  {
    name: 'Office',
    art: (
      <>
        <path d="M4 6l10-5 6 2v18l-6 2-9-4 8 1V5L8 7v9l-4 2z" fill="#c8301c" />
        <path d="M14 1l6 2v18l-6 2z" fill="#f0592a" />
      </>
    ),
  },
  {
    name: 'Skype',
    art: (
      <>
        <path d="M1 7c0-5 6-8 10-5 8-1 13 6 11 11 2 5-4 11-9 8.500C5 23 0 16 2 10z" fill="#0d9ce8" />
        <text x="12" y="18" fontSize="16" fontWeight="700" fill="#fff" textAnchor="middle">
          S
        </text>
      </>
    ),
  },
  {
    name: 'Word',
    art: (
      <>
        <path d="M1 3c7-3 12 0 20-1v20C14 20 9 22 1 21z" fill="#3c62b0" />
        <path d="M6 4h17v18l-17-1z" fill="#f2f5fb" stroke="#9db2dc" />
        <path d="M17 8h4M17 11h4M9 17h12M9 19.500h12" stroke="#3c62b0" />
        <text x="12" y="14" fontSize="11" fontWeight="700" fill="#2b4f9f" textAnchor="middle">
          W
        </text>
      </>
    ),
  },
  {
    name: 'gvSIG',
    art: (
      <>
        <path d="M1 1h21v12c0 6-5 9-10 11C6 21 2 18 1 12z" fill="#f0a51e" />
        <path d="M13 23c6-2 9-5 9-11-3 3-8 5-9 11z" fill="#49b4e6" />
        <text x="6" y="7" fontSize="8" fontWeight="700" fill="#1f180c" textAnchor="middle">
          gv
        </text>
        <text x="14" y="18" fontSize="9" fontWeight="700" fill="#fff" textAnchor="middle">
          SIG
        </text>
      </>
    ),
  },
  { name: 'Blender', active: true },
  {
    name: 'Chrome profile',
    running: true,
    art: (
      <>
        {chromeArt}
        <circle cx="17.500" cy="17.500" r="6.500" fill="#d9dde6" />
        <path d="M15 14l2.500 3 1.500-3M17.500 17v4.500h3" stroke="#40424a" fill="none" strokeWidth="1.300" />
        <path d="M14 21h4" stroke="#e0a93a" strokeWidth="1.500" />
      </>
    ),
  },
];

function Taskbar() {
  return (
    <TaskbarBox>
      <StartButton type="button" aria-label="Inicio">
        <TrayIcon viewBox="0 0 16 16" $size={17}>
          <path d="M0 2.200L7.200 1.200V7.600H0zM8.200 1L16 0v7.600H8.200zM0 8.500h7.200v6.400L0 13.900zM8.200 8.500H16V16l-7.800-1z" fill="#fff" />
        </TrayIcon>
      </StartButton>
      <TaskSearch>
        <Icon name="search" size={17} />
        <input type="search" placeholder="Escribe aquí para buscar." aria-label="Buscar" />
      </TaskSearch>
      <Apps>
        {apps.map(a => (
          <AppButton
            type="button"
            key={a.name}
            aria-label={a.name}
            $active={a.active}
            $running={a.running}
          >
            {a.art ? (
              <TrayIcon viewBox="0 0 24 24" $size={24}>
                {a.art}
              </TrayIcon>
            ) : (
              <BlenderLogo size={24} color="#ef7f1a" pupil="#20588f" />
            )}
          </AppButton>
        ))}
      </Apps>
      <Tray>
        <WeatherButton type="button">
          <TrayIcon viewBox="0 0 24 24" $size={24}>
            <path d="M5 14a5 5 0 0 1 0-9 6 6 0 0 1 10-2 5 5 0 0 1 3 11z" fill="#d5edfb" />
            <path d="M16 4a5.500 5.500 0 0 1 4 10.500c-3 1-7 0-9-.5 3-1 5-4 5-10z" fill="#6db3ea" />
            <path d="M8 16l-2 3M13 15l-1 3M18 15v4M7 21l-1 1" stroke="#3c9be8" strokeWidth="2.500" strokeLinecap="round" />
          </TrayIcon>
          <span>20°C</span>
          <span>Lluvia</span>
        </WeatherButton>
        <TrayIcons>
          <TrayIcon viewBox="0 0 16 16" $size={16}>
            <path d="M2 11l6-6 6 6" />
          </TrayIcon>
          <TrayIcon viewBox="0 0 16 16" $size={16}>
            <path d="M3 5.500h7v5.500H3zM10 7l3-1.500v5.500l-3-1.500M4.500 2.500c2-1.500 5-1.500 7 0M4.500 14c2 1.500 5 1.500 7 0" />
          </TrayIcon>
          <TrayIcon viewBox="0 0 16 16" $size={16}>
            <path d="M2 14A12 12 0 0 1 14 2M5 14a9 9 0 0 1 9-9M8 14a6 6 0 0 1 6-6M11 14a3 3 0 0 1 3-3" />
            <circle cx="13" cy="13.500" r="1.300" fill="#fff" />
          </TrayIcon>
          <TrayIcon viewBox="0 0 18 16" $size={18}>
            <path d="M1 5.500h3l4-3.500v12l-4-3.500H1zM10 5.500c1.500 1.500 1.500 3.500 0 5M12 3.500c2.500 2.500 2.500 6.500 0 9M14.500 1.800c3.200 3.500 3.200 9 0 12.400" />
          </TrayIcon>
        </TrayIcons>
        <Language>ESP</Language>
        <DateTime>
          <time>17:13</time>
          <time>10/9/2021</time>
        </DateTime>
        <Notifications type="button" aria-label="1 notificación">
          <TrayIcon viewBox="0 0 16 16" $size={17}>
            <path d="M0 1h16v11h-9l-3 3v-3H0z" fill="#fff" stroke="none" />
            <path d="M3 4h10M3 6.500h10M3 9h7" stroke="#332c40" />
          </TrayIcon>
          <Badge>1</Badge>
        </Notifications>
      </Tray>
    </TaskbarBox>
  );
}

export default function App() {
  return (
    <Page>
      <GlobalStyle />
      <TitleBar>
        <BlenderLogo size={16} color="#ea7a12" pupil="#265787" />
        <h1>Blender</h1>
        <WindowControls>
          <button type="button" aria-label="Minimizar">
            <TrayIcon viewBox="0 0 12 12" $size={12} $dark>
              <path d="M1 6h10" />
            </TrayIcon>
          </button>
          <button type="button" aria-label="Restaurar">
            <TrayIcon viewBox="0 0 12 12" $size={12} $dark>
              <path d="M1.500 3.500h7v7h-7zM3.500 3.500v-2h7v7h-2" />
            </TrayIcon>
          </button>
          <button type="button" aria-label="Cerrar">
            <TrayIcon viewBox="0 0 12 12" $size={12} $dark>
              <path d="M1 1l10 10M11 1L1 11" />
            </TrayIcon>
          </button>
        </WindowControls>
      </TitleBar>
      <TopBar />
      <Workspace>
        <Column>
          <Viewport />
          <Timeline />
        </Column>
        <Column>
          <Outliner />
          <Properties />
        </Column>
      </Workspace>
      <StatusBar />
      <Taskbar />
    </Page>
  );
}

/* CSS */
const GlobalStyle = createGlobalStyle`
  * { box-sizing: border-box; }
  body {
    margin: 0;
    background: #232323;
    color: #dcdcdc;
    font: 10px/14px "DejaVu Sans", sans-serif;
  }
  h1, p, ul { margin: 0; padding: 0; list-style: none; }
  button, input, select {
    margin: 0;
    padding: 0;
    border: none;
    background: none;
    color: inherit;
    font: inherit;
  }
  input { min-width: 0; outline: none; }
  input[type='search'] { appearance: none; }
`;

const center = css`
  display: flex;
  align-items: center;
  justify-content: center;
`;

const Svg = styled.svg`
  flex: none;
  width: ${p => p.$size}px;
  height: ${p => p.$size}px;
  fill: none;
  stroke: currentColor;
  color: ${p => p.$color || 'inherit'};
`;

const Page = styled.div`
  display: flex;
  flex-direction: column;
  height: 100vh;
  min-height: 900px;
  overflow: hidden;
`;

const TitleBar = styled.header`
  display: flex;
  align-items: center;
  gap: 4px;
  height: 23px;
  padding: 0 2px 0 3px;
  background: #fff;
  color: #000;

  h1 {
    flex: 1;
    font: 400 11px/16px 'Open Sans', sans-serif;
  }
`;

const WindowControls = styled.div`
  display: flex;
  align-self: stretch;

  button {
    ${center}
    width: 46px;
    padding-bottom: 3px;
  }
`;

const TrayIcon = styled.svg`
  flex: none;
  width: ${p => p.$size}px;
  height: ${p => p.$size}px;
  fill: none;
  stroke: ${p => (p.$dark ? '#000' : '#fff')};
  font-family: 'Liberation Sans', sans-serif;

  text,
  path[fill]:not([stroke]),
  circle {
    stroke: none;
  }
`;

const TopBarBox = styled.nav`
  display: flex;
  height: 27px;
  padding: 0 9px;
  background: #232323;
`;

const MenuList = styled.div`
  display: flex;
  align-items: center;
  width: 246px;
`;

const MenuButton = styled.button`
  padding: 0 7px 0 8px;

  svg + & {
    padding-left: 10px;
  }
`;

const TabList = styled.div`
  display: flex;
  align-items: flex-end;
  justify-content: space-between;
  width: 810px;
  padding-bottom: 2px;
`;

const Tab = styled.button`
  height: 19px;
  padding: 0 8px;
  border-radius: 3px 3px 0 0;
  background: ${p => (p.$active ? '#424242' : '#2a2a2a')};
  color: ${p => (p.$active ? '#fff' : '#989898')};
  line-height: 20px;
  white-space: nowrap;
`;

const AddTab = styled(Tab)`
  ${center}
  padding: 0 3px;
`;

const IdBlocks = styled.div`
  display: flex;
  gap: 6px;
  margin-left: auto;
  padding-top: 3px;
`;

const IdGroup = styled.div`
  display: flex;
  width: 191px;
  height: 20px;
  border: 1px solid #3a3a3a;
  border-radius: 3px;
  overflow: hidden;
`;

const IdButton = styled.button`
  ${center}
  width: 31px;
  background: #282828;
`;

const IdInput = styled.input`
  flex: 1;
  padding: 0 8px;
  border-left: 1px solid #3a3a3a;
  background: #1d1d1d;
`;

const IdCopy = styled.button`
  ${center}
  width: 19px;
  background: #545454;
`;

const IdRemove = styled.button`
  ${center}
  width: 20px;
  background: #2b2b2b;
  color: #6a6a6a;
`;

const Workspace = styled.main`
  display: grid;
  flex: 1;
  grid-template-columns: minmax(0, 1fr) 331px;
  gap: 3px;
  min-height: 0;
  padding: 0 1px 1px;
  background: #202020;
`;

const Column = styled.div`
  display: flex;
  flex-direction: column;
  gap: 3px;
  min-width: 0;
  min-height: 0;
`;

const ViewportBox = styled.section`
  position: relative;
  display: flex;
  flex: 1;
  flex-direction: column;
  min-height: 0;
  border-radius: 5px;
  background: #3b3b3b;
  overflow: hidden;
`;

/* the scene lies under the headers and tools */
const Canvas = styled.svg`
  position: absolute;
  inset: 0;
  width: 100%;
  height: 100%;
`;

const ToolHeader = styled.div`
  position: relative;
  display: grid;
  grid-template-columns: 1fr auto 1fr;
  align-items: center;
  height: 26px;
  padding: 0 7px 0 8px;
  background: #424242;
`;

const HeaderSide = styled.div`
  display: flex;
  align-items: center;
  justify-content: ${p => (p.$end ? 'flex-end' : 'flex-start')};
  gap: ${p => (p.$end ? 7 : 6)}px;
`;

const HeaderCenter = styled.div`
  display: flex;
  gap: 7px;
  margin-right: 22px;
`;

const DarkButton = styled.button`
  display: flex;
  align-items: center;
  justify-content: ${p => (p.$wide ? 'center' : 'flex-start')};
  gap: ${p => (p.$wide ? 1 : 4)}px;
  width: ${p => (p.$wide ? '31px' : 'auto')};
  height: 19px;
  padding: ${p => (p.$wide ? 0 : '0 5px')};
  border: 1px solid #3a3a3a;
  border-radius: 3px;
  background: #2b2b2b;
  white-space: nowrap;

  svg:last-child {
    margin: 0 ${p => (p.$wide ? 0 : '-3px')};
  }
`;

const FlatMenus = styled.div`
  display: flex;
  gap: 15px;
  padding-left: 3px;
`;

const ActiveTool = styled.button`
  ${center}
  width: 24px;
  height: 24px;
  margin: 0 7px 0 5px;
`;

const Strip = styled.div`
  display: flex;
  border-radius: 3px;
  overflow: hidden;
`;

const StripButton = styled.button`
  ${center}
  width: 19px;
  height: 19px;
  background: ${p => (p.$active ? '#5680c2' : '#545454')};
  color: ${p => (p.$active ? '#fff' : p.$dim ? '#a5a5a5' : '#dedede')};

  & + & {
    border-left: 1px solid #404040;
  }
`;

const TransportButton = styled(StripButton)`
  width: 20px;
`;

const StripMenu = styled.button`
  ${center}
  min-width: 19px;
  height: 19px;
  padding: 0 2px;
  background: ${p => (p.$disabled ? '#373737' : '#2b2b2b')};
  color: ${p => (p.$disabled ? '#848484' : 'inherit')};

  svg + svg,
  svg:only-child {
    opacity: ${p => (p.$disabled ? 0.4 : 1)};
  }
`;

const SelectBox = styled.label`
  display: flex;
  align-items: center;
  width: ${p => p.$width}px;
  height: 19px;
  padding: 0 1px 0 3px;
  border: 1px solid #3a3a3a;
  border-radius: 3px;
  background: #2b2b2b;
`;

const Select = styled.select`
  flex: 1;
  min-width: 0;
  padding-left: 7px;
  appearance: none;
  outline: none;
`;

const ModeHeader = styled.div`
  position: relative;
  display: flex;
  align-items: center;
  gap: 7px;
  height: 24px;
  padding: 0 7px 0 8px;
`;

const ViewMenus = styled.div`
  display: flex;
  gap: 3px;
`;

const ViewSettings = styled.div`
  display: flex;
  gap: 7px;
  margin-left: auto;
`;

const ViewBody = styled.div`
  position: relative;
  display: flex;
  flex: 1;
  padding: 9px 7px 0 8px;
`;

const Toolbar = styled.div`
  display: flex;
  flex-direction: column;
  gap: 5px;
`;

const ToolGroup = styled.div`
  border-radius: 4px;
  background: #2e2e2e;
  overflow: hidden;
`;

const ToolButton = styled.button`
  ${center}
  width: 40px;
  height: 35px;
  background: ${p => (p.$active ? '#5680c2' : 'transparent')};
  color: #eee;
  ${p =>
    p.$more &&
    css`
      background-image: linear-gradient(135deg, transparent 50%, #b5b5b5 50%);
      background-position: 35px 29px;
      background-repeat: no-repeat;
      background-size: 4px 4px;
    `}
`;

const ViewInfo = styled.div`
  margin-left: 18px;
  color: #fff;
  line-height: 18px;
  text-shadow: 0 0 2px #000;
`;

const NavColumn = styled.div`
  display: flex;
  flex-direction: column;
  align-items: flex-end;
  gap: 4px;
  margin-left: auto;
`;

const GizmoSvg = styled.svg`
  width: 80px;
  height: 80px;
  margin-right: 2px;
`;

const NavButton = styled.button`
  ${center}
  width: 26px;
  height: 26px;
  margin-right: 2px;
  border-radius: 50%;
  background: #2b2b2b;
  color: #e8e8e8;
`;

const SidebarToggle = styled.button`
  position: absolute;
  top: 14px;
  right: 0;
  display: flex;
  padding: 4px 0;
  border-radius: 4px 0 0 4px;
  background: #303030;
`;

const OutlinerBox = styled.section`
  flex: none;
  height: 310px;
  border-radius: 5px;
  background: #282828;
  overflow: hidden;
`;

const PanelHeader = styled.div`
  display: flex;
  align-items: center;
  gap: 6px;
  height: 25px;
  padding: 0 8px 0 10px;
  background: #3a3a3a;
`;

const Spacer = styled.div`
  flex: ${p => p.$grow || 1};
`;

const SearchField = styled.label`
  display: flex;
  align-items: center;
  width: 110px;
  height: 19px;
  padding: 0 4px;
  border: 1px solid #3d3d3d;
  border-radius: 3px;
  background: #1d1d1d;

  input {
    flex: 1;
  }
`;

const Tree = styled.ul`
  height: 285px;
  padding-top: 2px;
  background: repeating-linear-gradient(#282828 0 20px, #2c2c2c 20px 40px);
`;

const TreeRow = styled.li`
  position: relative;
  display: flex;
  align-items: center;
  height: 20px;
  padding: 0 10px 0 ${p => p.$indent}px;
  background: ${p => (p.$selected ? '#3b5689' : 'transparent')};
  color: ${p => (p.$selected ? '#f0a640' : '#c6c6c6')};

  > svg {
    color: #c6c6c6;
  }

  ${p =>
    p.$child &&
    css`
      &::before {
        content: '';
        height: 20px;
        margin-right: 17px;
        border-left: 1px solid #5c5c5c;
      }
    `}
`;

const TreeLabel = styled.span`
  margin-left: 5px;
  svg + & {
    margin-left: 8px;
  }
`;

const IconTile = styled.span`
  ${center}
  width: 19px;
  height: 18px;
  margin-left: ${p => (p.$first ? 7 : 5)}px;
  border-radius: 3px;
  background: ${p => {
    if (p.$first) return '#4a4a4a';
    return p.$lit ? '#6c7ba0' : 'transparent';
  }};
`;

const DataTile = styled.span`
  ${center}
  width: 20px;
  height: 18px;
  margin-left: 20px;
  border-radius: 3px;
  background: ${p => (p.$lit ? '#5c5c5c' : 'transparent')};
`;

const Toggles = styled.span`
  display: flex;
  align-items: center;
  gap: 6px;
  margin-left: auto;
  color: #d6d6d6;
`;

const Check = styled.input`
  width: 11px;
  height: 11px;
  margin-right: 2px;
  appearance: none;
  border-radius: 2px;
  background: #d9d9d9;

  &:checked::after {
    content: '';
    display: block;
    width: 4px;
    height: 7px;
    margin: 0 0 0 4px;
    border: solid #222;
    border-width: 0 2px 2px 0;
    transform: rotate(40deg);
  }
`;

const PlainButton = styled.button`
  display: flex;
`;

const PropertiesBox = styled.section`
  display: flex;
  flex: 1;
  flex-direction: column;
  min-height: 0;
  border-radius: 5px;
  overflow: hidden;
`;

const PropertiesBody = styled.div`
  display: flex;
  flex: 1;
  min-height: 0;
`;

const PropertyNav = styled.div`
  display: flex;
  flex: none;
  flex-direction: column;
  gap: 10px;
  width: 28px;
  padding: 9px 0 0 2px;
  background: #202020;
`;

const NavGroup = styled.div`
  display: flex;
  flex-direction: column;
  gap: 2px;
`;

const PropertyTab = styled.button`
  ${center}
  height: 26px;
  border-radius: 4px 0 0 4px;
  background: ${p => (p.$active ? '#424242' : '#2a2a2a')};
`;

const PropertyContent = styled.div`
  flex: 1;
  min-width: 0;
  background: #424242;
`;

const Breadcrumb = styled.div`
  display: flex;
  align-items: center;
  gap: 9px;
  height: 36px;
  padding: 0 10px 0 11px;

  button {
    margin-left: auto;
  }
`;

const NameRow = styled.div`
  display: flex;
  height: 19px;
  margin: 9px 8px 9px 9px;
  border-radius: 3px;
  overflow: hidden;
`;

const NameInput = styled(IdInput)`
  padding: 0 7px;
`;

const PanelTitle = styled.button`
  display: flex;
  align-items: center;
  width: 100%;
  height: 24px;
  padding: 0 7px 0 8px;
  gap: 5px;
  color: #c9c9c9;
  font-size: 11px;

  svg {
    color: #a5a5a5;
  }
`;

const Grip = styled.span`
  width: 12px;
  height: 6px;
  margin-left: auto;
  background: radial-gradient(circle, #1b1b1b 40%, #666 45% 60%, transparent 65%)
    0 0 / 3px 3px;
`;

const TransformPanel = styled.div`
  display: flex;
  flex-direction: column;
  gap: 6px;
  padding-top: 8px;
  background: #383838;
`;

const FieldGroup = styled.div`
  display: flex;
  flex-direction: column;
  gap: 1px;
`;

const FieldRow = styled.div`
  display: flex;
  align-items: center;
  height: 19px;

  label {
    width: 110px;
    margin-right: 11px;
    text-align: right;
  }
`;

const NumberInput = styled.input`
  flex: 1;
  height: 19px;
  border-radius: ${p => (p.$first ? '3px 3px' : '0 0')}
    ${p => (p.$last ? '3px 3px' : '0 0')};
  background: #585858;
  text-align: center;
`;

const LockButton = styled(PlainButton)`
  margin-left: 2px;
  color: #9a9a9a;
`;

const Dot = styled.i`
  width: 4px;
  height: 4px;
  margin: 0 15px 0 12px;
  border-radius: 50%;
  background: #d0d0d0;
`;

const ModeSelect = styled(SelectBox)`
  && {
    flex: 1;
    width: auto;
    margin-right: 16px;
    padding: 0;
    text-align: left;
  }
`;

const SubPanelTitle = styled(PanelTitle)`
  height: 27px;
  padding: 4px 7px 0 22px;
  color: #dcdcdc;
  font-size: 10px;
`;

const TimelineBox = styled.section`
  flex: none;
  border-radius: 5px;
  background: #2b2b2b;
  overflow: hidden;
`;

const TimelineHeader = styled.div`
  display: grid;
  grid-template-columns: 1fr auto 1fr;
  align-items: center;
  height: 25px;
  padding: 1px 6px 0 8px;
  background: #383838;
`;

const MenuPair = styled.div`
  display: flex;

  button {
    padding: 0 4px 0 7px;
    border-radius: 3px 0 0 3px;
  }
  button + button {
    margin-left: -1px;
    border-radius: 0 3px 3px 0;
  }
  svg:last-child {
    margin-left: 0;
  }
`;

const FrameInput = styled.input`
  width: 74px;
  height: 19px;
  border-radius: 3px;
  background: #585858;
  text-align: center;
`;

const FrameRange = styled(Strip)`
  gap: 1px;
`;

const RangeField = styled.label`
  display: flex;
  align-items: center;
  width: 85px;
  height: 19px;
  padding: 0 15px 0 14px;
  background: #585858;

  input {
    flex: 1;
    width: 0;
    text-align: right;
  }
`;

const Ruler = styled.div`
  position: relative;
`;

const Numbers = styled.div`
  display: flex;
  height: 23px;
  padding: 0 29px 0 81px;
  color: #a8a8a8;
  line-height: 24px;

  span {
    flex: 1;
    min-width: 0;
    text-align: center;
  }
`;

const Track = styled.div`
  display: flex;
  height: 12px;
  padding: 0 58px 0 52px;
  background: #393939;
`;

const TrackCell = styled.div`
  flex: 1;
  border-right: 1px solid ${p => (p.$end ? '#000' : '#2c2c2c')};
  background: linear-gradient(#383838, #383838) 50% 0 / 1px 100% no-repeat
    #424242;
`;

/* current frame marker, drawn over ruler and track */
const Playhead = styled.div`
  position: absolute;
  top: 3px;
  width: 24px;
  height: 17px;
  border-radius: 3px;
  background: #5680c2;
  color: #fff;
  line-height: 17px;
  text-align: center;
  transform: translateX(-50%);

  &::after {
    content: '';
    display: block;
    width: 2px;
    height: 15px;
    margin: 0 auto;
    background: #4f86cf;
  }
`;

const EdgeToggle = styled.button`
  position: absolute;
  top: 17px;
  ${p => (p.$end ? 'right: 0;' : 'left: 0;')}
  display: flex;
`;

const ScrollTrack = styled.div`
  padding: 1px 8px 2px;
  background: #333;
`;

const ScrollBar = styled.div`
  display: flex;
  align-items: center;
  justify-content: space-between;
  height: 8px;
  padding: 0 2px;
  border-radius: 4px;
  background: #646464;

  i {
    width: 5px;
    height: 5px;
    border-radius: 50%;
    background: #303030;
  }
`;

const StatusBox = styled.footer`
  display: flex;
  align-items: center;
  height: 20px;
  padding: 0 9px 0 12px;
  background: #303030;
  color: #a3a3a3;
`;

const Hint = styled.div`
  display: flex;
  align-items: center;
  gap: 5px;
  width: ${p => (p.$width ? `${p.$width}px` : 'auto')};
  white-space: nowrap;
`;

const MouseSvg = styled.svg`
  width: 17px;
  height: 16px;
  fill: none;
  stroke: currentColor;
`;

const Version = styled.span`
  margin-left: auto;
`;

const TaskbarBox = styled.footer`
  display: flex;
  height: 40px;
  background: linear-gradient(90deg, #262127, #312b3d 30%, #322c3f 85%, #352b3c);
  color: #fff;
  font-family: 'Open Sans', sans-serif;
`;

const StartButton = styled.button`
  ${center}
  width: 49px;
`;

const TaskSearch = styled.label`
  display: flex;
  align-items: center;
  gap: 11px;
  width: 343px;
  padding: 0 11px;
  border-bottom: 1px solid #b9b9b9;
  background: #f2f2f2;
  color: #222;

  input {
    flex: 1;
    font-size: 14px;
    line-height: 20px;
  }
  input::placeholder {
    color: #3a3a3a;
    opacity: 1;
  }
`;

const Apps = styled.div`
  display: flex;
  padding-left: 1px;
`;

const AppButton = styled.button`
  ${center}
  width: 49px;
  border-bottom: 2px solid
    ${p => (p.$active || p.$running ? '#82d5dc' : 'transparent')};
  background: ${p => (p.$active ? '#5a5565' : 'transparent')};
`;

const Tray = styled.div`
  display: flex;
  align-items: center;
  margin-left: auto;
  padding-right: 4px;
`;

const WeatherButton = styled.button`
  display: flex;
  align-items: center;
  gap: 9px;
  font-size: 13px;
`;

const TrayIcons = styled.div`
  display: flex;
  align-items: center;
  gap: 8px;
  margin-left: 15px;
`;

const Language = styled.span`
  margin-left: 11px;
  font-size: 11px;
`;

const DateTime = styled.div`
  display: flex;
  flex-direction: column;
  align-items: center;
  margin-left: 15px;
  font-size: 11px;
  line-height: 18px;
`;

const Notifications = styled.button`
  position: relative;
  display: flex;
  align-items: center;
  height: 40px;
  margin-left: 18px;
  padding: 0 18px 0 0;
  border-right: 1px solid #77727f;
`;

const Badge = styled.span`
  position: absolute;
  left: 7px;
  top: 19px;
  width: 16px;
  height: 16px;
  border: 1px solid #a5a1aa;
  border-radius: 50%;
  background: #2d2d2d;
  font-size: 11px;
  line-height: 14px;
  text-align: center;
`;
